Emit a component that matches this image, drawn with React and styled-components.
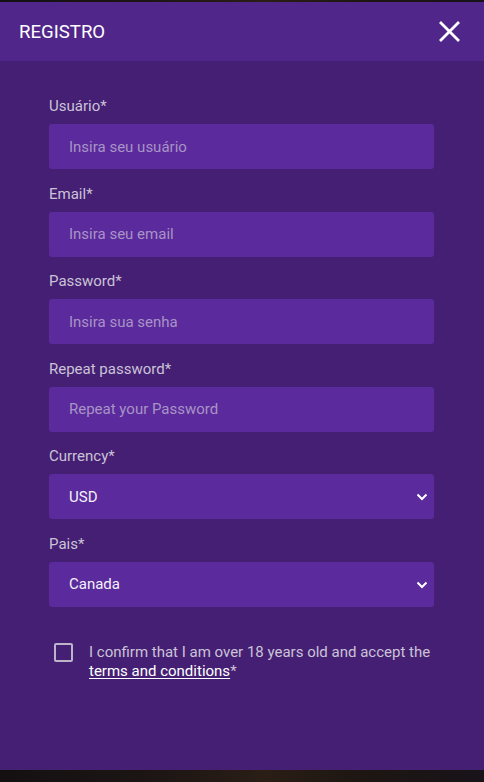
import React from "react";
import styled, { createGlobalStyle } from "styled-components";

const Global = createGlobalStyle`
  html, body { margin: 0; padding: 0; }
  body {
    background: #16110f;
    font-family: Roboto, "Liberation Sans", Arial, sans-serif;
    -webkit-font-smoothing: antialiased;
  }
  * { box-sizing: border-box; }
`;

const Page = styled.div`
  width: 484px;
  height: 782px;
  padding-top: 2px;
  background: linear-gradient(90deg, #141012 0%, #1c1514 30%, #2a1e16 55%, #1d1612 75%, #18131a 100%);
  overflow: hidden;
`;

const Modal = styled.div`
  width: 484px;
  height: 768px;
  background: #441f73;
  display: flex;
  flex-direction: column;
`;

const Header = styled.div`
  height: 59px;
  background: #51268a;
  display: flex;
  align-items: center;
  justify-content: space-between;
  padding: 0 24px 0 19px;
`;

const Title = styled.h1`
  margin: 0;
  font-size: 18.6px;
  font-weight: 400;
  color: #ffffff;
`;

const CloseButton = styled.button`
  background: none;
  border: none;
  padding: 0;
  width: 22px;
  height: 22px;
  display: flex;
  align-items: center;
  justify-content: center;
  cursor: pointer;
`;

const Form = styled.form`
  padding: 36px 50px 0 49px;
  display: flex;
  flex-direction: column;
  gap: 15.5px;
`;

const Field = styled.div`
  display: flex;
  flex-direction: column;
`;

const Label = styled.label`
  font-size: 15px;
  line-height: 19px;
  color: #cbc3d8;
  margin-bottom: 8px;
`;

const Input = styled.input`
  height: 45px;
  width: 100%;
  border: none;
  border-radius: 3px;
  background: #5b2a9c;
  padding: 0 20px;
  font-family: inherit;
  font-size: 15px;
  color: #ffffff;
  outline: none;
  &::placeholder { color: #a894c6; }
`;

const SelectWrap = styled.div`
  position: relative;
  height: 45px;
`;

const Select = styled.select`
  appearance: none;
  -webkit-appearance: none;
  height: 45px;
  width: 100%;
  border: none;
  border-radius: 3px;
  background: #5b2a9c;
  padding: 0 20px;
  font-family: inherit;
  font-size: 15px;
  color: #f4f1f8;
  outline: none;
`;

const Chevron = styled.svg`
  position: absolute;
  right: 6px;
  top: 19px;
  pointer-events: none;
`;

const ConsentRow = styled.div`
  display: flex;
  align-items: flex-start;
  gap: 16px;
  margin-top: 21px;
  padding-left: 5px;
`;

const Box = styled.span`
  flex: none;
  width: 19px;
  height: 19px;
  border: 2px solid #bdb3cb;
  border-radius: 2px;
`;

const ConsentText = styled.p`
  margin: 0;
  font-size: 15px;
  line-height: 19px;
  color: #cbc3d8;
`;

const TermsLink = styled.a`
  color: #ffffff;
  text-decoration: underline;
  text-underline-offset: 2px;
`;

const fields = [
  { label: "Usuário*", placeholder: "Insira seu usuário", type: "text" },
  { label: "Email*", placeholder: "Insira seu email", type: "email" },
  { label: "Password*", placeholder: "Insira sua senha", type: "password" },
  { label: "Repeat password*", placeholder: "Repeat your Password", type: "password" },
];

const selects = [
  { label: "Currency*", value: "USD", options: ["USD", "EUR", "BRL"] },
  { label: "Pais*", value: "Canada", options: ["Canada", "Brasil", "Portugal"] },
];

export default function App() {
  return (
    <>
      <Global />
      <Page>
        <Modal>
          <Header>
            <Title>REGISTRO</Title>
            <CloseButton aria-label="close">
              <svg width="21" height="21" viewBox="0 0 21 21">
                <path d="M2 2 L19 19 M19 2 L2 19" stroke="#fff" strokeWidth="2.8" strokeLinecap="square" />
              </svg>
            </CloseButton>
          </Header>
          <Form onSubmit={(e) => e.preventDefault()}>
            {fields.map((f) => (
              <Field key={f.label}>
                <Label>{f.label}</Label>
                <Input type={f.type} placeholder={f.placeholder} />
              </Field>
            ))}
            {selects.map((s) => (
              <Field key={s.label}>
                <Label>{s.label}</Label>
                <SelectWrap>
                  <Select defaultValue={s.value}>
                    {s.options.map((o) => (
                      <option key={o}>{o}</option>
                    ))}
                  </Select>
                  <Chevron width="12" height="8" viewBox="0 0 12 8">
                    <path d="M1.5 1.5 L6 6 L10.5 1.5" stroke="#fff" strokeWidth="2" fill="none" />
                  </Chevron>
                </SelectWrap>
              </Field>
            ))}
            <ConsentRow>
              <Box />
              <ConsentText>
                I confirm that I am over 18 years old and accept the{" "}
                <TermsLink href="#">terms and conditions</TermsLink>*
              </ConsentText>
            </ConsentRow>
          </Form>
        </Modal>
      </Page>
    </>
  );
}
